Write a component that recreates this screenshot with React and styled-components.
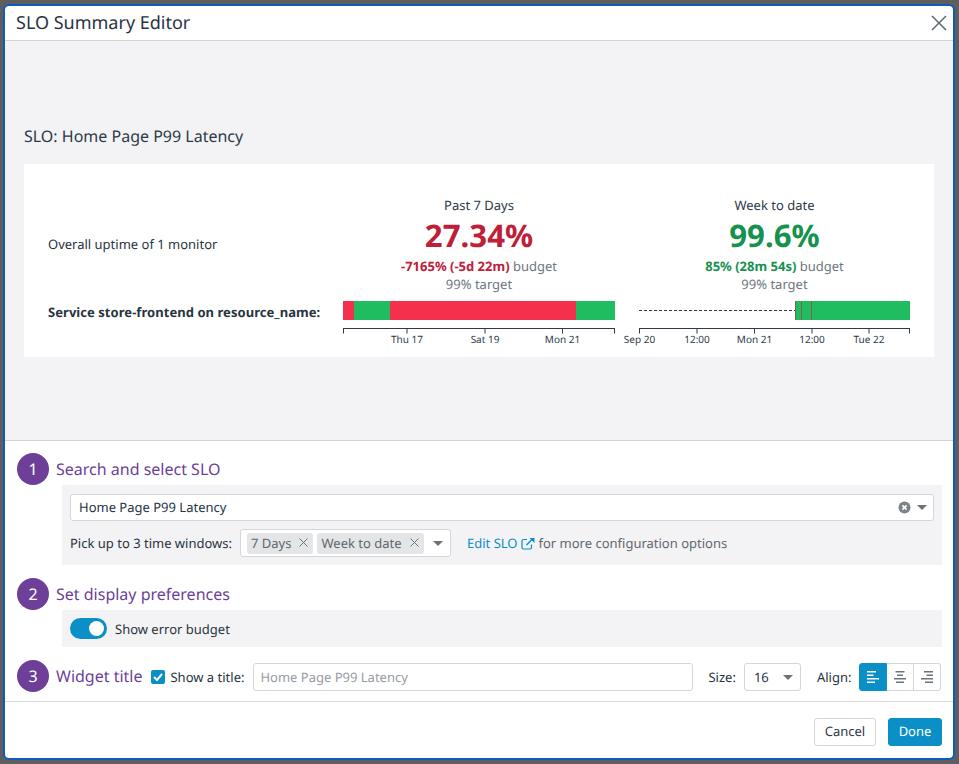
import React from "react";
import styled, { createGlobalStyle } from "styled-components";

const Global = createGlobalStyle`
  * { box-sizing: border-box; }
  html, body { margin: 0; padding: 0; }
  body {
    background: #5e5e5e; font-family: "Noto Sans", "Open Sans", sans-serif; color: #2c3a47; overflow: hidden;
    text-rendering: geometricPrecision;
  }
`;
const Page = styled.div`
  width: 959px; height: 764px; padding: 4px 4px 4px 3px;
`;
const Modal = styled.div`
  height: 100%; display: flex; flex-direction: column; background: #fff;
  border: 2px solid #0b5cbd; border-radius: 6px; overflow: hidden;
`;
const Header = styled.header`
  height: 35px; flex: none; display: flex; align-items: center; justify-content: space-between;
  border-bottom: 1px solid #d2d3d6; padding: 0 6px 0 11px;
`;
const Title = styled.h1`
  margin: 0; font-size: 18px; font-weight: 400; line-height: 24px; color: #28343f;
`;
const CloseButton = styled.button`
  border: 0; background: none; padding: 0; display: flex; color: #5d6b75;
`;
const Preview = styled.section`
  height: 400px; flex: none; background: #f3f2f5; padding: 84px 19px 0 19px;
  border-bottom: 1px solid #d2d3d6;
`;
const SloName = styled.h2`
  margin: 0 0 17px; font-size: 16px; font-weight: 400; line-height: 22px; color: #2c3a47;
`;
const Panel = styled.div`
  height: 193px; background: #fff; padding: 32px 0 0 24px; display: grid;
  grid-template-columns: 271px 272px 271px; column-gap: 24px; grid-template-rows: 97px auto; row-gap: 8px;
`;
const RowLabel = styled.div`
  font-size: 13px; line-height: 18px; color: #28343f; font-weight: ${p => (p.$bold ? 700 : 400)};
  white-space: nowrap; align-self: ${p => (p.$bold ? "start" : "center")};
  padding-top: ${p => (p.$bold ? "2px" : "0")}; padding-bottom: ${p => (p.$bold ? "0" : "2px")};
  letter-spacing: ${p => (p.$bold ? "0.05px" : "0")};
`;
const Metric = styled.div`
  text-align: center; font-size: 13px; line-height: 18px; color: #6f7680; white-space: nowrap;
`;
const MetricHead = styled.div`
  color: #2c3a47;
`;
const MetricValue = styled.div`
  font-size: 31.2px; font-weight: 700; line-height: 43px; padding-top: 1px; margin-bottom: -1px; color: ${p => p.$color};
`;
const Budget = styled.b`
  color: ${p => p.$color}; font-weight: 700;
`;
const Form = styled.section`
  flex: 1; padding: 12px 11px 0 12px; display: flex; flex-direction: column; border-bottom: 1px solid #d9dadc;
`;
const StepRow = styled.div`
  display: flex; align-items: center; height: 32px;
`;
const StepBadge = styled.span`
  width: 32px; height: 32px; border-radius: 50%; background: #6d3f99; color: #fff; font-size: 16px;
  display: flex; align-items: center; justify-content: center; margin-right: 7px; flex: none;
`;
const StepTitle = styled.span`
  font-size: 16px; color: #6d3f99; line-height: 22px; white-space: nowrap;
`;
const Well = styled.div`
  margin: 0 0 13px 45px; background: #f3f2f5; padding: ${p => p.$top || 8}px 8px 8px;
  display: flex; flex-direction: column; gap: 8px;
`;
const SearchBox = styled.div`
  height: 27px; background: #fff; border: 1px solid #d5d6d9; border-radius: 3px;
  display: flex; align-items: center; padding: 0 6px 1px 8px; font-size: 13px; color: #28343f;
`;
const Grow = styled.span`
  flex: 1;
`;
const Line = styled.div`
  display: flex; align-items: center; font-size: 13px; color: #28343f; white-space: nowrap;
`;
const TagSelect = styled.div`
  width: 211px; height: 28px; margin-left: 8px; background: #fff; border: 1px solid #d5d6d9; border-radius: 3px;
  display: flex; align-items: center; padding: 0 7px 0 6px; gap: 4px;
`;
const Tag = styled.span`
  height: 21px; padding: 0 5px 1px 4px; background: #e4e5e7; border-radius: 3px; color: #5f6870;
  display: flex; align-items: center; gap: 8px; font-size: 13px;
`;
const Link = styled.a`
  color: #0b8fc7; margin-left: 16px; display: flex; align-items: center; gap: 3px;
`;
const Muted = styled.span`
  color: #5f6870; margin-left: 4px;
`;
const Toggle = styled.span`
  width: 37px; height: 21px; border-radius: 11px; background: #0b8fc7; position: relative; margin-right: 8px; flex: none;
  &::after { content: ""; position: absolute; right: 3px; top: 3px; width: 15px; height: 15px; border-radius: 50%; background: #fff; }
`;
const Check = styled.span`
  width: 14px; height: 14px; margin: 2px 0 0 9px; border-radius: 2px; background: #0b8fc7; display: flex;
  align-items: center; justify-content: center; flex: none;
`;
const CheckLabel = styled.span`
  font-size: 13px; margin: 2px 9px 0 5px; color: #28343f; white-space: nowrap;
`;
const TitleInput = styled.div`
  width: 440px; height: 28px; margin-top: 2px; border: 1px solid #d5d6d9; border-radius: 3px; padding: 0 6px;
  display: flex; align-items: center; font-size: 13px; color: #969ca3;
`;
const FieldLabel = styled.span`
  font-size: 13px; color: #28343f; margin: 2px 8px 0 ${p => p.$ml}px;
`;
const SizeSelect = styled.div`
  width: 57px; height: 28px; margin-top: 2px; border: 1px solid #d5d6d9; border-radius: 3px; padding: 0 7px 0 9px;
  display: flex; align-items: center; justify-content: space-between; font-size: 13px; color: #28343f;
`;
const AlignGroup = styled.div`
  display: flex; height: 28px; width: 82px; margin-top: 2px;
`;
const AlignBtn = styled.span`
  flex: 1; display: flex; align-items: center; justify-content: center;
  border: 1px solid ${p => (p.$on ? "#0b8fc7" : "#d5d6d9")};
  background: ${p => (p.$on ? "#0b8fc7" : "#fff")}; color: ${p => (p.$on ? "#fff" : "#6b747b")};
  & + & { border-left: 0; }
  &:first-child { border-radius: 3px 0 0 3px; }
  &:last-child { border-radius: 0 3px 3px 0; }
`;
const Footer = styled.footer`
  height: 56px; flex: none; padding: 16px 11px 0 0; display: flex; justify-content: flex-end; gap: 12px;
`;
const Btn = styled.button`
  height: 28px; padding: 0 0 2px; width: ${p => p.$w}px; border-radius: 3px; font: 13px "Noto Sans", sans-serif;
  text-rendering: geometricPrecision;
  background: ${p => (p.$primary ? "#0b8fc7" : "#fff")}; color: ${p => (p.$primary ? "#fff" : "#2c3a47")};
  border: 1px solid ${p => (p.$primary ? "#0b8fc7" : "#d5d6d9")};
`;

const Caret = () => (
  <svg width="10" height="5" viewBox="0 0 10 5"><path d="M0 0h10L5 5z" fill="#6b7278" /></svg>
);
const TagX = () => (
  <svg width="9" height="9" viewBox="0 0 9 9" stroke="#6b747b" strokeWidth="1"><path d="M.5.5l8 8M8.5.5l-8 8" /></svg>
);
const ClearIcon = () => (
  <svg width="13" height="13" viewBox="0 0 13 13" style={{ marginRight: 6 }}>
    <circle cx="6.5" cy="6.5" r="6" fill="#7d8389" />
    <path d="M4.4 4.4l4.2 4.2M8.6 4.4l-4.2 4.2" stroke="#fff" strokeWidth="1.7" />
  </svg>
);
const ExternalIcon = () => (
  <svg width="14" height="13" viewBox="0 0 14 13" fill="none" stroke="#0b8fc7" strokeWidth="1.2">
    <path d="M10.5 7.5v3a1.5 1.5 0 0 1-1.5 1.5H2.5A1.5 1.5 0 0 1 1 10.500V4a1.500 1.500 0 0 1 1.500-1.500H6" />
    <path d="M5.500 8L12 1.500" strokeWidth="1.500" />
    <path d="M8.500 1h5v5z" fill="#0b8fc7" stroke="none" />
  </svg>
);
const AlignIcon = ({ rows }) => (
  <svg width="12" height="12" viewBox="0 0 12 12" fill="currentColor">
    {rows.map(([x, w], i) => <rect key={i} x={x} y={i * 3.5} width={w} height="1.500" />)}
  </svg>
);

const axisColor = "#2c3a47";
const Chart = ({ width, segments, dash, ticks, labels, marks }) => (
  <svg width={width} height="46" viewBox={`0 0 ${width} 46`} style={{ overflow: "visible", display: "block" }}>
    {dash && <line x1="0" x2={dash} y1="9.500" y2="9.500" stroke="#2c3a47" strokeDasharray="3 2" />}
    {segments.map(([x, w, c], i) => <rect key={i} x={x} y="0" width={w} height="19" fill={c} />)}
    {marks && marks.map(x => <rect key={x} x={x} y="0" width="0.800" height="19" fill="#a8434a" />)}
    <line x1="0" x2={width} y1="27.500" y2="27.500" stroke={axisColor} />
    {ticks.map(x => <line key={x} x1={x} x2={x} y1="27" y2="32.500" stroke={axisColor} />)}
    {labels.map(([x, t]) => (
      <text key={x} x={x} y="42" textAnchor="middle" fontSize="10" fill={axisColor} fontFamily="Noto Sans">{t}</text>
    ))}
  </svg>
);

const RED = "#f5304c";
const GREEN = "#1fbd5f";

export default function App() {
  return (
    <Page>
      <Global />
      <Modal>
        <Header>
          <Title>SLO Summary Editor</Title>
          <CloseButton aria-label="Close">
            <svg width="16" height="16" viewBox="0 0 16 16" stroke="currentColor" strokeWidth="1.500">
              <path d="M1 1l14 14M15 1L1 15" />
            </svg>
          </CloseButton>
        </Header>
        <Preview>
          <SloName>SLO: Home Page P99 Latency</SloName>
          <Panel>
            <RowLabel>Overall uptime of 1 monitor</RowLabel>
            <Metric>
              <MetricHead>Past 7 Days</MetricHead>
              <MetricValue $color="#be2039">27.34%</MetricValue>
              <div><Budget $color="#be2039">-7165% (-5d 22m)</Budget> budget</div>
              <div>99% target</div>
            </Metric>
            <Metric>
              <MetricHead>Week to date</MetricHead>
              <MetricValue $color="#16924f">99.6%</MetricValue>
              <div><Budget $color="#16924f">85% (28m 54s)</Budget> budget</div>
              <div>99% target</div>
            </Metric>
            <RowLabel $bold>Service store-frontend on resource_name:</RowLabel>
            <Chart
              width={272}
              segments={[[0, 11, RED], [11, 36, GREEN], [47, 186, RED], [233, 39, GREEN]]}
              ticks={[0.500, 64, 142, 219.500, 271.500]}
              labels={[[64, "Thu 17"], [142, "Sat 19"], [219.500, "Mon 21"]]}
            />
            <Chart
              width={271}
              dash={156}
              segments={[[156, 115, GREEN]]}
              marks={[156, 162, 172]}
              ticks={[0.500, 58, 115.500, 173, 230, 270.500]}
              labels={[[0.500, "Sep 20"], [58, "12:00"], [115.500, "Mon 21"], [173, "12:00"], [230, "Tue 22"]]}
            />
          </Panel>
        </Preview>
        <Form>
          <StepRow><StepBadge>1</StepBadge><StepTitle>Search and select SLO</StepTitle></StepRow>
          <Well $top={9}>
            <SearchBox>
              <Grow>Home Page P99 Latency</Grow>
              <ClearIcon />
              <Caret />
            </SearchBox>
            <Line>
              Pick up to 3 time windows:
              <TagSelect>
                <Tag>7 Days <TagX /></Tag>
                <Tag>Week to date <TagX /></Tag>
                <Grow />
                <Caret />
              </TagSelect>
              <Link>Edit SLO <ExternalIcon /></Link>
              <Muted>for more configuration options</Muted>
            </Line>
          </Well>
          <StepRow><StepBadge>2</StepBadge><StepTitle>Set display preferences</StepTitle></StepRow>
          <Well>
            <Line><Toggle />Show error budget</Line>
          </Well>
          <StepRow>
            <StepBadge>3</StepBadge>
            <StepTitle>Widget title</StepTitle>
            <Check>
              <svg width="10" height="8" viewBox="0 0 10 8" fill="none" stroke="#fff" strokeWidth="2"><path d="M1 4l3 3 5-6" /></svg>
            </Check>
            <CheckLabel>Show a title:</CheckLabel>
            <TitleInput>Home Page P99 Latency</TitleInput>
            <FieldLabel $ml={15}>Size:</FieldLabel>
            <SizeSelect>16 <Caret /></SizeSelect>
            <FieldLabel $ml={16}>Align:</FieldLabel>
            <AlignGroup>
              <AlignBtn $on><AlignIcon rows={[[0, 9], [0, 6.5], [0, 12], [0, 8]]} /></AlignBtn>
              <AlignBtn><AlignIcon rows={[[1.5, 9], [3, 6], [0, 12], [2, 8]]} /></AlignBtn>
              <AlignBtn><AlignIcon rows={[[3, 9], [5.5, 6.5], [0, 12], [4, 8]]} /></AlignBtn>
            </AlignGroup>
          </StepRow>
        </Form>
        <Footer>
          <Btn $w={62}>Cancel</Btn>
          <Btn $w={54} $primary>Done</Btn>
        </Footer>
      </Modal>
    </Page>
  );
}
